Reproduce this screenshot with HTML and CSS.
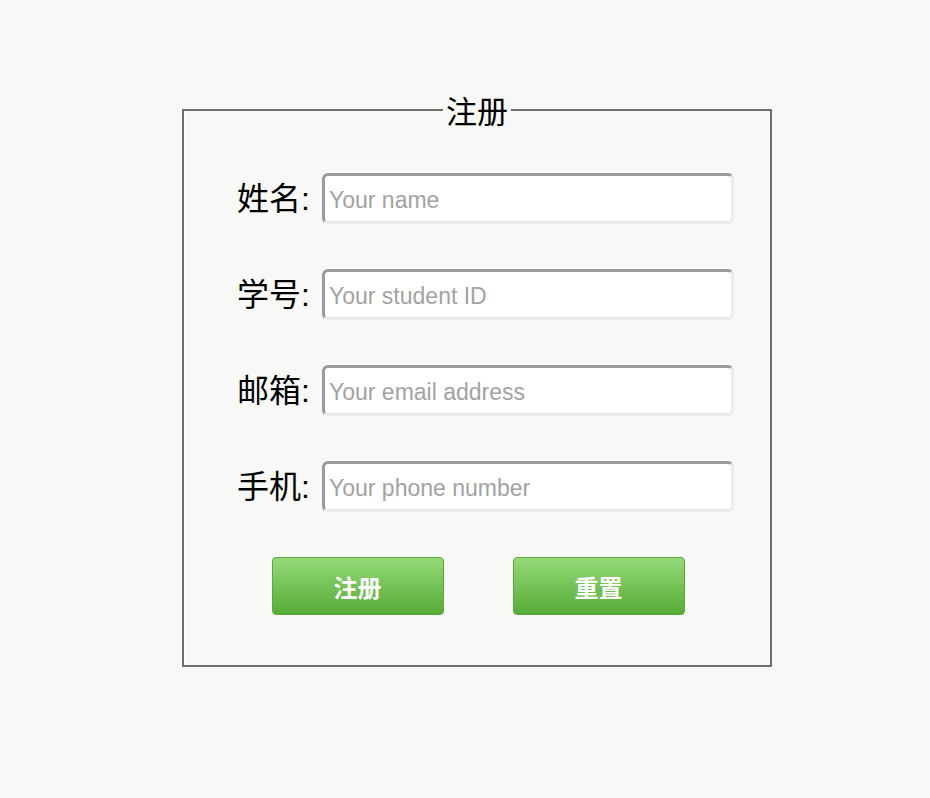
FILE: index.html
```html
<!DOCTYPE html>
<html lang="zh">
<head>
<meta charset="utf-8">
<title>注册</title>
<link rel="stylesheet" href="styles.css">
</head>
<body>
<form class="reg-form">
  <fieldset class="reg-box">
    <legend class="reg-title">注册</legend>
    <div class="field-row">
      <label class="field-label" for="name">姓名:</label>
      <input class="field-input" id="name" type="text" placeholder="Your name">
    </div>
    <div class="field-row">
      <label class="field-label" for="sid">学号:</label>
      <input class="field-input" id="sid" type="text" placeholder="Your student ID">
    </div>
    <div class="field-row">
      <label class="field-label" for="email">邮箱:</label>
      <input class="field-input" id="email" type="text" placeholder="Your email address">
    </div>
    <div class="field-row">
      <label class="field-label" for="phone">手机:</label>
      <input class="field-input" id="phone" type="text" placeholder="Your phone number">
    </div>
    <div class="button-row">
      <button class="btn" type="button">注册</button>
      <button class="btn" type="button">重置</button>
    </div>
  </fieldset>
</form>
</body>
</html>
```
FILE: styles.css
```css
html, body {
  margin: 0;
  padding: 0;
  background: #f8f8f6;
}

body {
  font-family: "Liberation Sans", "Noto Sans CJK SC", sans-serif;
  color: #000;
}

.reg-form {
  padding-top: 94px;
  padding-left: 182px;
}

.reg-box {
  box-sizing: border-box;
  width: 590px;
  margin: 0;
  padding: 47px 0 50px 0;
  border: 2px solid #6e6e6e;
  box-shadow: inset 1px 0 0 #ffffff;
  display: flex;
  flex-direction: column;
  gap: 45px;
}

.reg-title {
  margin: 0 auto;
  padding: 0 3px;
  font-size: 31px;
  line-height: 32px;
  font-family: "Noto Sans CJK SC", sans-serif;
}

.field-row {
  display: grid;
  grid-template-columns: 126px 412px;
  column-gap: 12px;
  align-items: center;
}

.field-label {
  text-align: right;
  font-size: 32px;
  line-height: 40px;
}

.field-input {
  box-sizing: border-box;
  height: 51px;
  width: 412px;
  margin: 0;
  padding: 4px 0 0 4px;
  border-style: solid;
  border-width: 3px;
  border-color: #9a9a9a #ececec #ececec #9a9a9a;
  border-radius: 6px;
  background: #fff;
  font-family: "Liberation Sans", sans-serif;
  font-size: 23px;
  color: #333;
  outline: none;
}

.field-input::placeholder {
  color: #a2a2a2;
}

.button-row {
  display: flex;
  justify-content: center;
  gap: 69px;
  padding-left: 2px;
}

.btn {
  box-sizing: border-box;
  width: 172px;
  height: 58px;
  margin: 0;
  border: 1px solid #5aa83d;
  border-radius: 4px;
  background: linear-gradient(to bottom, #95d978 0%, #74c357 50%, #57ac36 100%);
  color: #fff;
  font-family: "Noto Sans CJK SC", sans-serif;
  font-weight: bold;
  font-size: 24px;
  cursor: pointer;
}
```
